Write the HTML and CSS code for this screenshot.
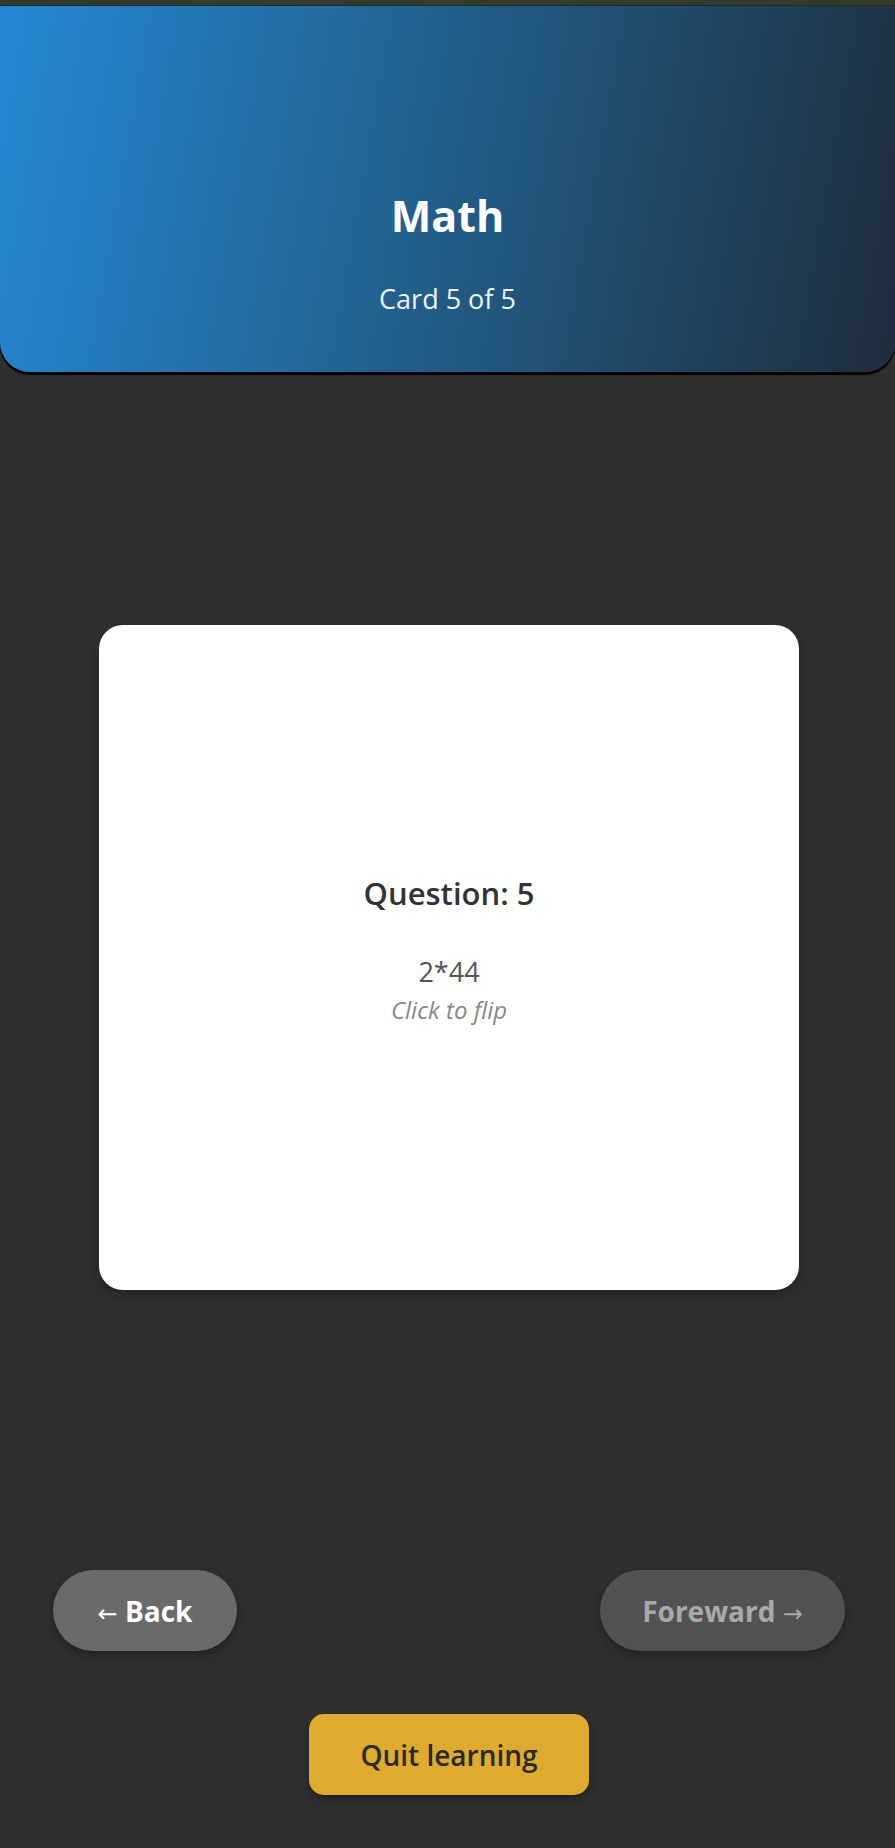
FILE: index.html
```html
<!DOCTYPE html>
<html lang="en">
<head>
<meta charset="utf-8">
<title>Math – Learning</title>
<link rel="stylesheet" href="styles.css">
</head>
<body>
<div class="topstrip"></div>
<header class="deck-header">
  <h1 class="deck-title">Math</h1>
  <p class="deck-progress">Card 5 of 5</p>
</header>
<main class="learn">
  <section class="flashcard">
    <h2 class="card-title">Question: 5</h2>
    <p class="card-text">2*44</p>
    <p class="card-hint">Click to flip</p>
  </section>
  <nav class="card-nav">
    <button class="nav-btn back-btn"><span class="arrow">←</span> Back</button>
    <button class="nav-btn fwd-btn">Foreward <span class="arrow">→</span></button>
  </nav>
  <div class="quit-row">
    <button class="quit-btn">Quit learning</button>
  </div>
</main>
</body>
</html>
```

FILE: styles.css
```css
* { box-sizing: border-box; }

html, body {
  margin: 0;
  padding: 0;
}

body {
  background: #2f2f2f;
  font-family: "Open Sans", "Noto Sans", "DejaVu Sans", sans-serif;
  min-height: 1848px;
}

.topstrip {
  height: 6px;
  background: #323b2d;
  border-bottom: 1px solid #1f2a22;
}

.deck-header {
  height: 366px;
  padding-top: 184px;
  background: linear-gradient(100deg, #2588d5 0%, #22628f 45%, #1f2d3c 100%);
  border-radius: 0 0 30px 30px;
  box-shadow: 0 3px 1px rgba(0, 0, 0, 0.95);
  text-align: center;
  color: #fff;
}

.deck-title {
  margin: 0;
  font-size: 43px;
  line-height: 52px;
  font-weight: 700;
}

.deck-progress {
  margin: 40px 0 0;
  font-size: 27px;
  line-height: 33px;
  color: #eef3f7;
}

.learn {
  padding-top: 253px;
}

.flashcard {
  width: 700px;
  height: 665px;
  margin: 0 auto 0 99px;
  padding-top: 248px;
  background: #fff;
  border-radius: 24px;
  box-shadow: 0 4px 10px rgba(0, 0, 0, 0.3);
  text-align: center;
}

.card-title {
  margin: 0;
  font-size: 31px;
  line-height: 40px;
  font-weight: 600;
  color: #333;
}

.card-text {
  margin: 42px 0 0;
  font-size: 27px;
  line-height: 34px;
  color: #555;
}

.card-hint {
  margin: 6px 0 0;
  font-size: 24px;
  line-height: 30px;
  font-style: italic;
  color: #888;
}

.card-nav {
  margin-top: 280px;
  padding: 0 50px 0 53px;
  display: flex;
  justify-content: space-between;
}

.nav-btn {
  height: 81px;
  border: none;
  border-radius: 41px;
  font-family: inherit;
  font-size: 28px;
  font-weight: 700;
  box-shadow: 0 4px 8px rgba(0, 0, 0, 0.3);
  padding: 0;
}

.arrow {
  font-family: "DejaVu Sans", sans-serif;
  font-weight: 400;
  font-size: 24px;
}

.back-btn {
  width: 184px;
  background: #6a6a6a;
  color: #fff;
}

.fwd-btn {
  width: 245px;
  background: #525252;
  color: #a9a9a9;
}

.quit-row {
  margin-top: 63px;
  display: flex;
  justify-content: center;
}

.quit-btn {
  width: 280px;
  height: 81px;
  margin-left: 3px;
  border: none;
  border-radius: 15px;
  background: #dfaa30;
  color: #2b2b2b;
  font-family: inherit;
  font-size: 28px;
  font-weight: 600;
  box-shadow: 0 4px 8px rgba(0, 0, 0, 0.3);
  padding: 0;
}
```
